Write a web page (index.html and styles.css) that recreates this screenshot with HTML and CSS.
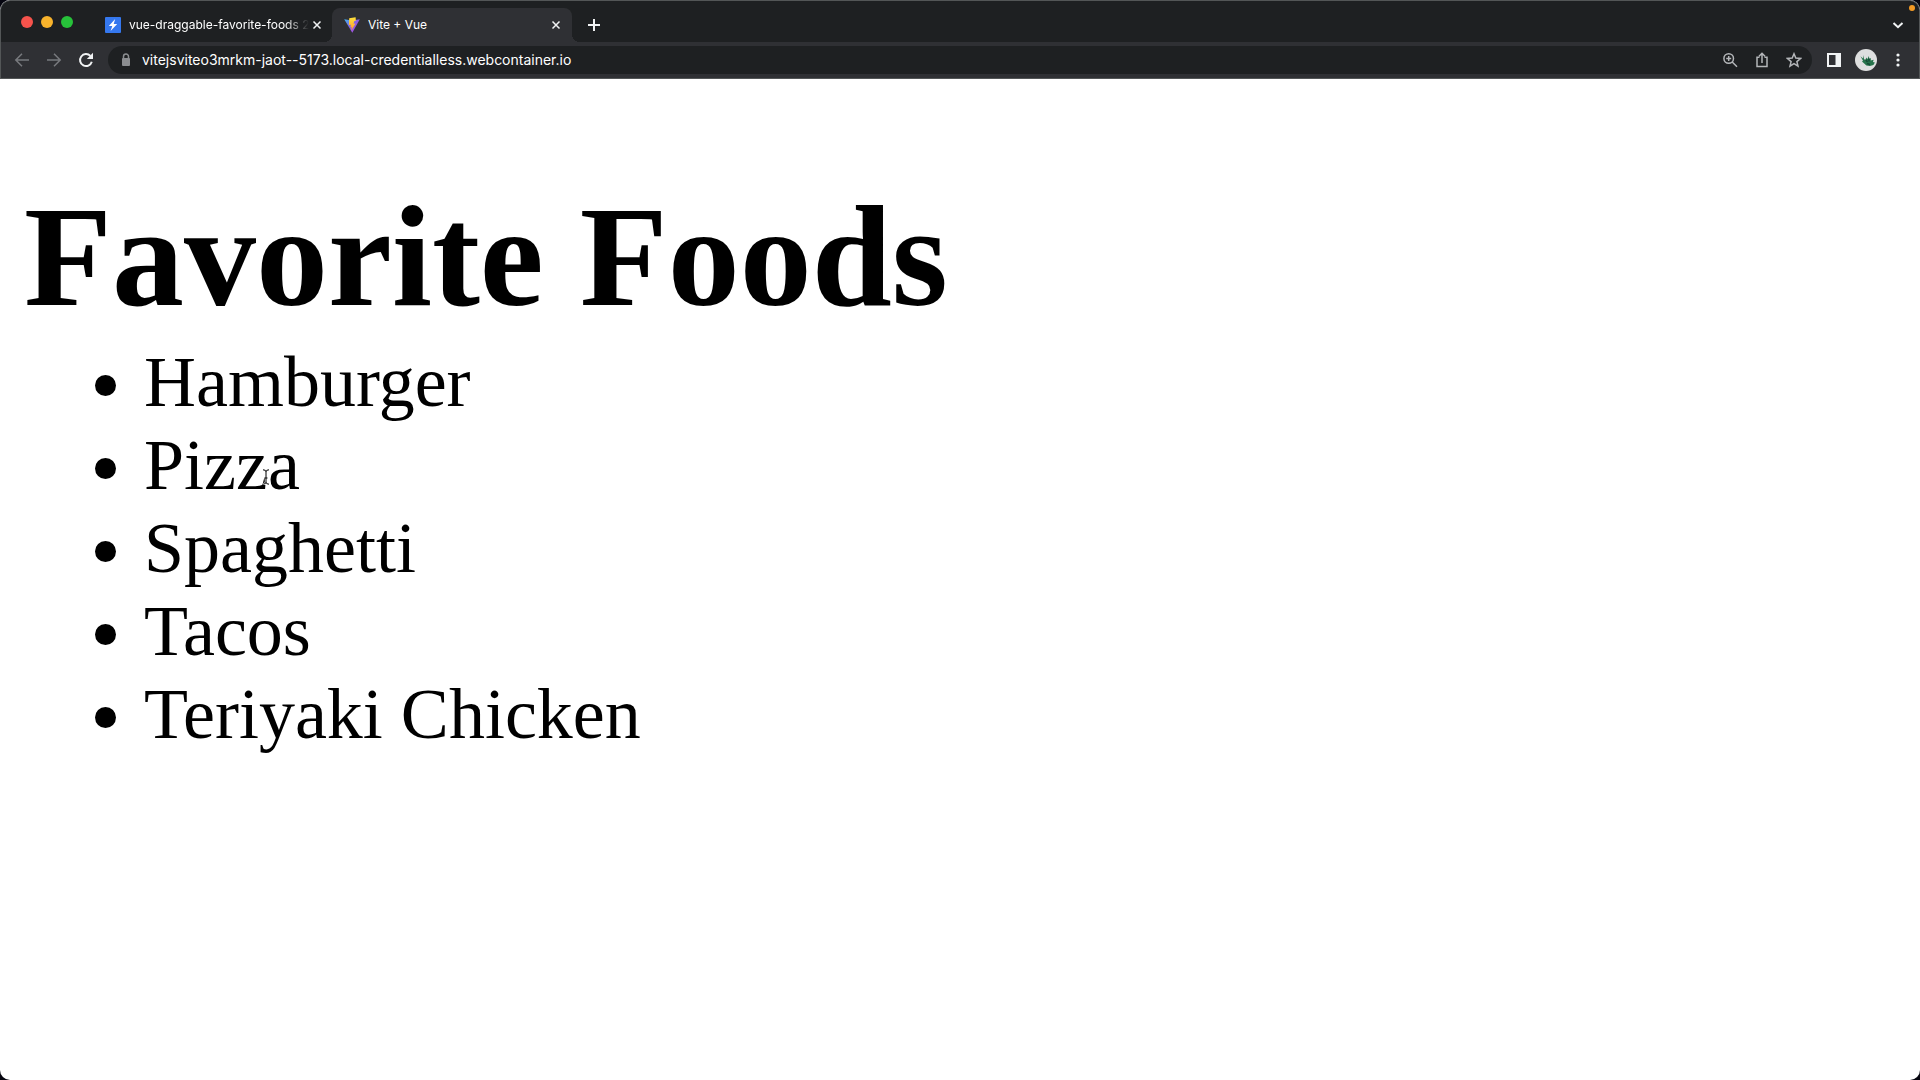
FILE: index.html
```
<!DOCTYPE html>
<html lang="en">
<head>
    <meta charset="UTF-8">
    <meta name="viewport" content="width=device-width, initial-scale=1.0">
    <title>Vite + Vue</title>
    <link rel="stylesheet" href="styles.css">
</head>
<body>
    <div class="window">
        <header class="tab-strip">
            <div class="window-controls">
                <button class="light red" aria-label="Close window"></button>
                <button class="light yellow" aria-label="Minimize window"></button>
                <button class="light green" aria-label="Zoom window"></button>
            </div>
            <div class="tab">
                <svg class="favicon" viewBox="0 0 16 16" aria-hidden="true">
                    <rect width="16" height="16" rx="1" fill="#3578ef"/>
                    <path d="M10.2 2 3.8 9h3.5L5.6 14 12.2 6.9H8.7z" fill="#fff"/>
                </svg>
                <a href="#" class="tab-title fade">vue-draggable-favorite-foods 2</a>
                <button class="icon-btn" aria-label="Close tab">
                    <svg viewBox="0 0 16 16"><path d="M4.5 4.5l7 7M11.5 4.5l-7 7"/></svg>
                </button>
            </div>
            <div class="tab active">
                <svg class="favicon" viewBox="0 0 16 16" aria-hidden="true">
                    <defs>
                        <linearGradient id="vite" x1="0" y1="0" x2="1" y2="1">
                            <stop offset="0" stop-color="#41b6f0"/>
                            <stop offset=".5" stop-color="#8a5ce0"/>
                            <stop offset="1" stop-color="#b44be8"/>
                        </linearGradient>
                        <linearGradient id="bolt" x1="0" y1="0" x2="0" y2="1">
                            <stop offset="0" stop-color="#ffe23c"/>
                            <stop offset="1" stop-color="#ff9a2e"/>
                        </linearGradient>
                    </defs>
                    <path d="M.2 2.3 8 3.5l7.8-1.2L8.3 15.8z" fill="url(#vite)"/>
                    <path d="M11.6.2 5.2 1.2 4.9 8l2-.3-.6 2.7 1.4-.3-.3 3.4 4.1-7-2 .3.8-2.8 1.6-.3z" fill="url(#bolt)"/>
                </svg>
                <a href="#" class="tab-title">Vite + Vue</a>
                <button class="icon-btn" aria-label="Close tab">
                    <svg viewBox="0 0 16 16"><path d="M4.5 4.5l7 7M11.5 4.5l-7 7"/></svg>
                </button>
            </div>
            <button class="icon-btn new-tab" aria-label="New tab">
                <svg viewBox="0 0 16 16"><path d="M8 2v12M2 8h12" stroke-width="2"/></svg>
            </button>
            <button class="icon-btn tab-search" aria-label="Search tabs">
                <svg viewBox="0 0 16 16"><path d="M3.5 6 8 10.2 12.5 6" stroke-width="2"/></svg>
            </button>
            <span class="recording"></span>
        </header>

        <nav class="toolbar">
            <button class="icon-btn dim" aria-label="Back">
                <svg viewBox="0 0 16 16"><path d="M15 8H2M8 1.8 1.8 8 8 14.2"/></svg>
            </button>
            <button class="icon-btn dim" aria-label="Forward">
                <svg viewBox="0 0 16 16"><path d="M1 8h13M8 1.8 14.2 8 8 14.2"/></svg>
            </button>
            <button class="icon-btn" aria-label="Reload">
                <svg viewBox="0 0 16 16"><path d="M13.8 9.8A6 6 0 1 1 12.4 3.9" stroke-width="2"/><path d="M15 .8V7H8.8z" class="solid"/></svg>
            </button>
            <div class="address-bar">
                <svg class="lock" viewBox="0 0 16 16" aria-hidden="true">
                    <path d="M5.5 7V4.5a2.500 2.500 0 0 1 5 0V7" fill="none" stroke="#8b8d90" stroke-width="1.5"/>
                    <rect x="4" y="6" width="8" height="8" rx="1" fill="#8b8d90"/>
                </svg>
                <input type="text" aria-label="Address" value="vitejsviteo3mrkm-jaot--5173.local-credentialless.webcontainer.io">
                <button class="icon-btn muted" aria-label="Zoom">
                    <svg viewBox="0 0 16 16"><circle cx="6.7" cy="6.5" r="4.8"/><path d="M10.2 10 15 14.8M6.7 4v5M4.2 6.5h5"/></svg>
                </button>
                <button class="icon-btn muted" aria-label="Share">
                    <svg viewBox="0 0 16 16"><path d="M5.5 5.2H3v9.3h10V5.2h-2.5M8 11V1.5M5 4.3l3-3 3 3"/></svg>
                </button>
                <button class="icon-btn muted" aria-label="Bookmark">
                    <svg viewBox="0 0 16 16"><path d="M8 1.8l1.8 4.3 4.7.4-3.6 3.1 1.1 4.6L8 11.7l-4 2.5 1.1-4.6L1.5 6.5l4.7-.4z"/></svg>
                </button>
            </div>
            <button class="icon-btn" aria-label="Side panel">
                <svg viewBox="0 0 16 16"><path d="M1 1h14v14H1zM3 3v10h6.5V3z" fill-rule="evenodd" class="solid"/></svg>
            </button>
            <button class="icon-btn avatar" aria-label="Profile">
                <svg viewBox="0 0 22 22">
                    <circle cx="11" cy="11" r="11" fill="#dedfdf"/>
                    <path d="M5.5 7.2 8 9.5 8.2 6l.8 4 1.8 1.5.2-3 1.5 1.5 1.3-3 .6 3 1.6-1-.3 2.5 3-.8-.8 2.3 2 .4-1.5 2.6-3.5 1-3.5-.4-2.2-2.1L7 12.5l1-.8z" fill="#26734b"/>
                    <path d="M10.5 10.5l2 2.5M14 9.5v3M12 14.5l3 1" stroke="#164a35" fill="none"/>
                </svg>
            </button>
            <button class="icon-btn" aria-label="Menu">
                <svg viewBox="0 0 16 16"><circle cx="8" cy="3" r="1.6" class="solid"/><circle cx="8" cy="8" r="1.6" class="solid"/><circle cx="8" cy="13" r="1.6" class="solid"/></svg>
            </button>
        </nav>

        <main>
            <h1>Favorite Foods</h1>
            <ul>
                <li>Hamburger</li>
                <li>Pizza
                    <svg class="cursor" viewBox="0 0 8 16" aria-hidden="true">
                        <path d="M1 .8q3 0 3 2v10.4q0 2-3 2M7 .8q-3 0-3 2M7 15.2q-3 0-3-2M2.5 9h3" stroke="#fff" stroke-width="2.5" fill="none"/>
                        <path d="M1 .8q3 0 3 2v10.4q0 2-3 2M7 .8q-3 0-3 2M7 15.2q-3 0-3-2M2.5 9h3" stroke="#000" fill="none"/>
                    </svg>
                </li>
                <li>Spaghetti</li>
                <li>Tacos</li>
                <li>Teriyaki Chicken</li>
            </ul>
        </main>
    </div>
</body>
</html>
```
FILE: styles.css
```
* {
    box-sizing: border-box;
}
html {
    background: #05050f;
}
body {
    margin: 0;
    font-family: Inter, Roboto, sans-serif;
}
.window {
    display: flex;
    flex-direction: column;
    min-height: 100vh;
    background: #fff;
    border-radius: 10px;
    overflow: hidden;
}

/* tab strip */
.tab-strip {
    position: relative;
    display: flex;
    align-items: flex-end;
    height: 42px;
    background: #1e2022;
    border: 1px solid #535657;
    border-bottom: 0;
    border-radius: 10px 10px 0 0;
}
.window-controls {
    display: flex;
    align-self: center;
    gap: 8px;
    width: 92px;
    padding-left: 20px;
}
.light {
    width: 12px;
    height: 12px;
    padding: 0;
    border: 0;
    border-radius: 50%;
}
.red { background: #f6534c; }
.yellow { background: #f8b32c; }
.green { background: #27c23a; }
.tab {
    position: relative;
    display: flex;
    align-items: center;
    gap: 8px;
    width: 240px;
    height: 34px;
    margin-right: -1px;
    padding: 0 8px 0 12px;
    border-radius: 8px 8px 0 0;
}
.tab.active {
    background: #2f3034;
}
.tab.active::before,
.tab.active::after {
    content: "";
    position: absolute;
    bottom: 0;
    width: 8px;
    height: 8px;
}
.tab.active::before {
    left: -8px;
    background: radial-gradient(circle at 0 0, transparent 8px, #2f3034 8px);
}
.tab.active::after {
    right: -8px;
    background: radial-gradient(circle at 100% 0, transparent 8px, #2f3034 8px);
}
.favicon {
    flex: none;
    width: 16px;
    height: 16px;
}
.tab-title {
    flex: 1;
    min-width: 0;
    overflow: hidden;
    white-space: nowrap;
    font-size: 12px;
    line-height: 16px;
    color: #fff;
    text-decoration: none;
}
.tab-title.fade {
    margin-right: -8px;
    -webkit-mask-image: linear-gradient(to right, #000 156px, transparent 180px);
    mask-image: linear-gradient(to right, #000 156px, transparent 180px);
}
.icon-btn {
    flex: none;
    display: flex;
    padding: 0;
    border: 0;
    background: none;
    color: #f1f3f4;
}
.icon-btn svg {
    width: 16px;
    height: 16px;
    fill: none;
    stroke: currentColor;
    stroke-width: 1.5;
}
.icon-btn .solid {
    fill: currentColor;
    stroke: none;
}
.dim { color: #77797d; }
.muted { color: #b4b6b9; }
.new-tab {
    align-self: center;
    margin: 6px 0 0 15px;
}
.tab-search {
    align-self: center;
    margin: 6px 13px 0 auto;
}
.recording {
    position: absolute;
    top: 4px;
    right: 4px;
    width: 6px;
    height: 6px;
    border-radius: 50%;
    background: #f39a25;
}

/* toolbar */
.toolbar {
    display: flex;
    align-items: center;
    gap: 16px;
    height: 37px;
    padding: 0 13px;
    background: #2f3034;
    border: 1px solid #535657;
    border-top: 0;
}
.address-bar {
    flex: 1;
    display: flex;
    align-items: center;
    gap: 16px;
    height: 28px;
    margin: 0 -2px;
    padding: 0 10px;
    background: #1e2022;
    border-radius: 14px;
}
.lock {
    width: 16px;
    height: 16px;
    margin-right: -8px;
}
.address-bar input {
    flex: 1;
    min-width: 0;
    padding: 0;
    border: 0;
    outline: 0;
    background: none;
    font-family: inherit;
    font-size: 14px;
    line-height: 16px;
    color: #fff;
}
.avatar {
    margin: 0 -3px;
}
.avatar svg {
    width: 22px;
    height: 22px;
    stroke: none;
}

/* page */
main {
    padding: 95px 24px 24px;
    font-family: "Liberation Serif", "Times New Roman", serif;
    font-size: 72px;
    line-height: 83px;
    color: #000;
}
h1 {
    margin: 0 0 1px;
    font-size: 144px;
    line-height: 166px;
}
ul {
    margin: 0;
    padding-left: 120px;
}
li {
    position: relative;
}
.cursor {
    position: absolute;
    left: 118px;
    top: 45px;
    width: 8px;
    height: 16px;
}
```
